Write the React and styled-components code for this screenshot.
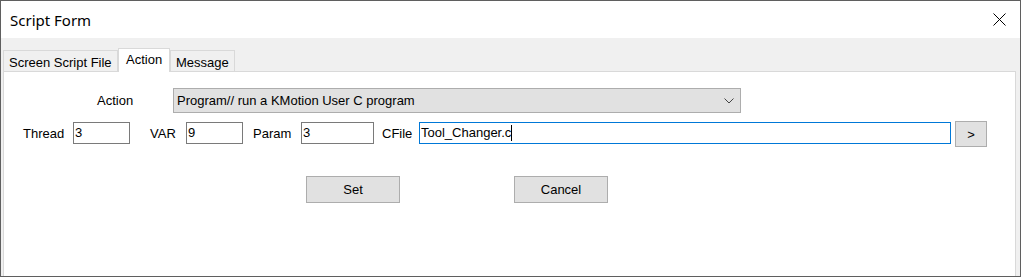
import React from 'react';
import styled, { createGlobalStyle } from 'styled-components';

const Global = createGlobalStyle`
  html, body { margin: 0; padding: 0; background: #f0f0f0; }
  #root { width: 1021px; height: 277px; }
`;

const Window = styled.div`
  box-sizing: border-box;
  width: 1021px;
  height: 277px;
  border: 1px solid #5f5f5f;
  display: flex;
  flex-direction: column;
  background: #f0f0f0;
  overflow: hidden;
  font-family: "Liberation Sans", Arial, sans-serif;
  font-size: 13px;
  color: #000;
`;

const TitleBar = styled.div`
  height: 37px;
  flex: none;
  background: #fff;
  display: flex;
  align-items: center;
  justify-content: space-between;
  padding: 0 14px 0 9px;
`;

const Title = styled.span`
  font-family: "Noto Sans", "Open Sans", sans-serif;
  font-size: 15px;
  color: #000;
`;

const Body = styled.div`
  flex: 1;
  display: flex;
  flex-direction: column;
  padding: 10px 4px 0 2px;
`;

const TabStrip = styled.div`
  display: flex;
  align-items: flex-end;
  height: 23px;
  flex: none;
`;

const Tab = styled.div`
  box-sizing: border-box;
  height: ${p => (p.$active ? '24px' : '21px')};
  margin-bottom: ${p => (p.$active ? '-1px' : '0')};
  position: relative;
  z-index: ${p => (p.$active ? 1 : 0)};
  background: ${p => (p.$active ? '#fff' : '#f0f0f0')};
  border: 1px solid #d9d9d9;
  border-bottom: none;
  padding: ${p => (p.$active ? '3px 7px 0 7px' : '4px 4px 0 5px')};
  width: ${p => p.$w}px;
  white-space: nowrap;
`;

const Panel = styled.div`
  flex: 1;
  background: #fff;
  border: 1px solid #d9d9d9;
  border-bottom: none;
  display: flex;
  flex-direction: column;
`;

const ActionRow = styled.div`
  display: flex;
  align-items: center;
  margin-top: 16px;
  padding-left: 93px;
`;

const Label = styled.div`
  box-sizing: border-box;
  width: ${p => p.$w}px;
  margin-left: ${p => p.$ml || 0}px;
  height: 22px;
  display: flex;
  align-items: center;
  padding-top: ${p => p.$pt || 0}px;
  white-space: nowrap;
`;

const Select = styled.div`
  box-sizing: border-box;
  width: 568px;
  height: 25px;
  border: 1px solid #adadad;
  background: #e1e1e1;
  display: flex;
  align-items: center;
  justify-content: space-between;
  padding: 0 6px 0 3px;
`;

const FieldRow = styled.div`
  display: flex;
  align-items: flex-start;
  margin-top: 8px;
  height: 26px;
  padding-left: 19px;
`;

const Field = styled.div`
  box-sizing: border-box;
  width: ${p => p.$w}px;
  height: 22px;
  margin-top: 1px;
  border: 1px solid ${p => (p.$focused ? '#0078d7' : '#7a7a7a')};
  background: #fff;
  padding: 0 1px;
  line-height: 20px;
  display: flex;
  align-items: center;
  white-space: nowrap;
`;

const Caret = styled.span`
  display: inline-block;
  width: 1px;
  height: 16px;
  background: #000;
  margin-left: 0px;
`;

const Button = styled.div`
  box-sizing: border-box;
  width: ${p => p.$w}px;
  height: ${p => p.$h}px;
  margin-left: ${p => p.$ml || 0}px;
  border: 1px solid #adadad;
  background: #e1e1e1;
  display: flex;
  align-items: center;
  justify-content: center;
`;

const ButtonRow = styled.div`
  display: flex;
  margin-top: 29px;
  padding-left: 302px;
`;

const CloseIcon = () => (
  <svg width="13" height="13" viewBox="0 0 13 13">
    <path d="M0.5 0.5 L12.5 12.5 M12.5 0.5 L0.5 12.5" stroke="#000" strokeWidth="1" fill="none" />
  </svg>
);

const Chevron = () => (
  <svg width="10" height="6" viewBox="0 0 10 6">
    <path d="M0.5 0.5 L5 5 L9.5 0.5" stroke="#444" strokeWidth="1" fill="none" />
  </svg>
);

export default function App() {
  return (
    <>
      <Global />
      <Window>
        <TitleBar>
          <Title>Script Form</Title>
          <CloseIcon />
        </TitleBar>
        <Body>
          <TabStrip>
            <Tab $w={115}>Screen Script File</Tab>
            <Tab $w={52} $active>Action</Tab>
            <Tab $w={65}>Message</Tab>
          </TabStrip>
          <Panel>
            <ActionRow>
              <Label $w={76}>Action</Label>
              <Select>
                <span>Program// run a KMotion User C program</span>
                <Chevron />
              </Select>
            </ActionRow>
            <FieldRow>
              <Label $w={50} $pt={3}>Thread</Label>
              <Field $w={57}>3</Field>
              <Label $w={36} $ml={20} $pt={3}>VAR</Label>
              <Field $w={57}>9</Field>
              <Label $w={48} $ml={10} $pt={3}>Param</Label>
              <Field $w={73}>3</Field>
              <Label $w={37} $ml={8} $pt={3}>CFile</Label>
              <Field $w={532} $focused>Tool_Changer.c<Caret /></Field>
              <Button $w={32} $h={26} $ml={4}>&gt;</Button>
            </FieldRow>
            <ButtonRow>
              <Button $w={94} $h={27}>Set</Button>
              <Button $w={94} $h={27} $ml={114}>Cancel</Button>
            </ButtonRow>
          </Panel>
        </Body>
      </Window>
    </>
  );
}
